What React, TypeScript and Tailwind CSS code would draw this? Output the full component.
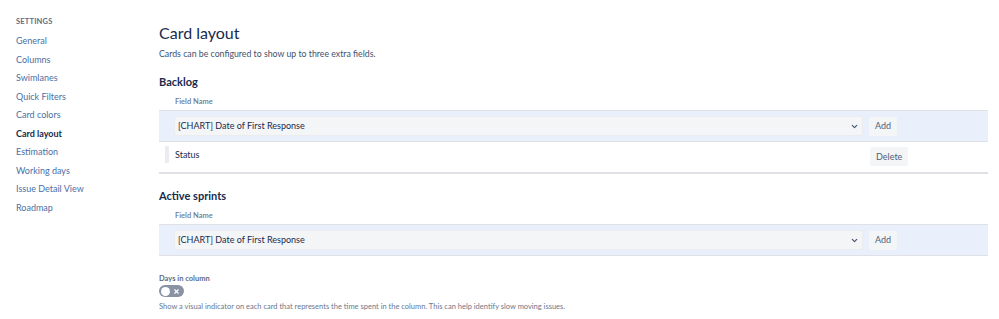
import { ChevronDown, X } from "lucide-react"

const links = [
  "General",
  "Columns",
  "Swimlanes",
  "Quick Filters",
  "Card colors",
  "Card layout",
  "Estimation",
  "Working days",
  "Issue Detail View",
  "Roadmap",
]

function Select({ value }: { value: string }) {
  return (
    <div className="flex-1 h-[20px] flex items-center justify-between pl-[3px] pr-[3px] bg-[#f4f5f7] border border-[#ebecf0] rounded-[2px] text-[9px] text-[#172b4d]">
      <span>{value}</span>
      <ChevronDown size={9} strokeWidth={3} className="text-[#42526e]" />
    </div>
  )
}

function Button({ label }: { label: string }) {
  return (
    <div className="flex h-[19px] px-[6px] items-center bg-[#f4f5f7] rounded-[2px] text-[9px] text-[#505f79]">
      {label}
    </div>
  )
}

function FieldTable({ rows }: { rows: string[] }) {
  return (
    <div className="w-[829px]">
      <div className="pl-[16px] h-[21px] pt-[8px] leading-[10px] text-[7.5px] font-semibold text-[#6b778c]">Field Name</div>
      <div className="h-[32px] flex items-center gap-[6px] pl-[15px] pr-[91px] bg-[#eaf0fb] border-t border-b border-[#dfe1e6]">
        <Select value="[CHART] Date of First Response" />
        <Button label="Add" />
      </div>
      {rows.map((r) => (
        <div key={r} className="h-[32px] flex items-start pt-[4px] border-b-2 border-[#dfe1e6]">
          <div className="w-[4px] h-[17px] ml-[6px] mr-[6px] bg-[#ebecf0]" />
          <span className="flex-1 text-[9px] leading-[17px] text-[#172b4d]">{r}</span>
          <div className="w-[118px] pt-[1px] flex">
            <Button label="Delete" />
          </div>
        </div>
      ))}
    </div>
  )
}

export default function App() {
  return (
    <div className="flex w-[999px] h-[319px] bg-white overflow-hidden" style={{ fontFamily: 'Lato, "Noto Sans", sans-serif' }}>
      <aside className="w-[159px] shrink-0 pl-[16px] pt-[17px]">
        <div className="text-[7.5px] leading-[10px] font-bold text-[#5e6c84] tracking-wide">SETTINGS</div>
        <ul className="mt-[5px]">
          {links.map((l) => (
            <li
              key={l}
              className={
                l === "Card layout"
                  ? "h-[18.55px] leading-[18.55px] text-[9px] font-bold text-[#172b4d]"
                  : "h-[18.55px] leading-[18.55px] text-[9px] text-[#4a6fa5]"
              }
            >
              {l}
            </li>
          ))}
        </ul>
      </aside>
      <main className="flex-1 pt-[22px]">
        <h1 className="text-[16px] text-[#172b4d] leading-[22px]">Card layout</h1>
        <p className="mt-[4px] text-[8.75px] leading-[12px] text-[#42526e]">Cards can be configured to show up to three extra fields.</p>
        <h2 className="mt-[15px] text-[11px] leading-[14px] font-bold text-[#172b4d]">Backlog</h2>
        <FieldTable rows={["Status"]} />
        <h2 className="mt-[15px] text-[11px] leading-[14px] font-bold text-[#172b4d]">Active sprints</h2>
        <FieldTable rows={[]} />
        <div className="mt-[18px] text-[7.5px] leading-[10px] font-bold text-[#5e6c84]">Days in column</div>
        <div className="mt-[1px] w-[25px] h-[12px] rounded-full bg-[#8993a4] flex items-center justify-between px-[2px]">
          <div className="w-[9px] h-[9px] rounded-full bg-white" />
          <X size={7} strokeWidth={4} className="text-white mr-[2px]" />
        </div>
        <p className="mt-[5px] text-[7.5px] leading-[10px] text-[#6b778c]">
          Show a visual indicator on each card that represents the time spent in the column. This can help identify slow moving issues.
        </p>
      </main>
    </div>
  )
}
